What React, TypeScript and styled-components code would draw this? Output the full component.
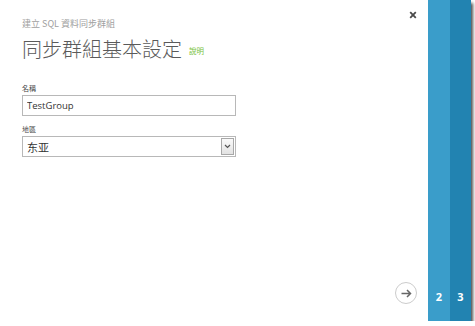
import { createGlobalStyle } from "styled-components";
import styled from "styled-components";

const GlobalStyle = createGlobalStyle`
  html, body {
    margin: 0;
    padding: 0;
    background: #ffffff;
    font-family: "Open Sans", "Noto Sans CJK TC", sans-serif;
  }
`;

const Panel = styled.div`
  display: flex;
  width: 471px;
  height: 321px;
  background: #ffffff;
  box-shadow: 2px 3px 3px rgba(0, 0, 0, 0.7);
`;

const Content = styled.div`
  flex: 1;
  display: flex;
  flex-direction: column;
  padding: 11px 11px 17px 22px;
`;

const Header = styled.div`
  display: flex;
  justify-content: space-between;
  align-items: flex-start;
`;

const Titles = styled.div`
  display: flex;
  flex-direction: column;
  padding-top: 7px;
`;

const Subtitle = styled.div`
  font-family: "Noto Sans CJK TC", sans-serif;
  font-size: 9px;
  line-height: 11px;
  color: #a0a0a0;
`;

const TitleRow = styled.div`
  display: flex;
  align-items: center;
  gap: 7px;
  margin-top: 8px;
`;

const Title = styled.h1`
  margin: 0;
  font-family: "Noto Sans CJK TC", sans-serif;
  font-weight: 300;
  font-size: 20px;
  line-height: 24px;
  color: #5a5a5a;
`;

const Help = styled.a`
  font-family: "Noto Sans CJK TC", sans-serif;
  font-size: 7.5px;
  line-height: 10px;
  color: #77c13a;
  margin-top: 3px;
`;

const CloseButton = styled.button`
  border: 0;
  padding: 0;
  background: none;
  width: 8px;
  height: 8px;
  display: flex;
`;

const Form = styled.div`
  display: flex;
  flex-direction: column;
  width: 214px;
  margin-top: 23px;
`;

const Label = styled.label<{ $first?: boolean }>`
  font-family: "Noto Sans CJK TC", sans-serif;
  font-size: 7px;
  line-height: 9px;
  color: #444444;
  margin-top: ${(p) => (p.$first ? "0" : "9px")};
  margin-bottom: 2px;
`;

const TextInput = styled.input`
  box-sizing: border-box;
  width: 214px;
  height: 21px;
  border: 1px solid #b8b8b8;
  padding: 0 4px;
  font-family: "Open Sans", sans-serif;
  font-size: 9.5px;
  color: #333333;
  outline: none;
`;

const SelectBox = styled.div`
  box-sizing: border-box;
  display: flex;
  align-items: center;
  justify-content: space-between;
  height: 21px;
  border: 1px solid #b8b8b8;
  padding: 0 1px 0 4px;
`;

const SelectValue = styled.span`
  font-family: "Noto Sans CJK SC", sans-serif;
  font-size: 11px;
  color: #333333;
`;

const DropButton = styled.span`
  box-sizing: border-box;
  display: flex;
  align-items: center;
  justify-content: center;
  width: 13px;
  height: 17px;
  border: 1px solid #a8a8a8;
  background: linear-gradient(#fafafa, #e2e2e2);
`;

const Footer = styled.div`
  margin-top: auto;
  display: flex;
  justify-content: flex-end;
`;

const NextButton = styled.button`
  box-sizing: border-box;
  width: 22px;
  height: 22px;
  padding: 0;
  border-radius: 50%;
  border: 1.5px solid #cccccc;
  background: #ffffff;
  display: flex;
  align-items: center;
  justify-content: center;
`;

const Step = styled.div<{ $bg: string; $w: number }>`
  width: ${(p) => p.$w}px;
  background: ${(p) => p.$bg};
  display: flex;
  align-items: flex-end;
  justify-content: center;
  padding-bottom: 18px;
  box-sizing: border-box;
  font-family: "Open Sans", sans-serif;
  font-weight: 700;
  font-size: 11px;
  line-height: 12px;
  color: #ffffff;
`;

export default function App() {
  return (
    <>
      <GlobalStyle />
      <Panel>
        <Content>
          <Header>
            <Titles>
              <Subtitle>建立 SQL 資料同步群組</Subtitle>
              <TitleRow>
                <Title>同步群組基本設定</Title>
                <Help>說明</Help>
              </TitleRow>
            </Titles>
            <CloseButton aria-label="close">
              <svg width="8" height="8" viewBox="0 0 8 8">
                <path d="M1.2 1.2L6.8 6.8M6.8 1.2L1.2 6.8" stroke="#4a4a4a" strokeWidth="1.8" />
              </svg>
            </CloseButton>
          </Header>

          <Form>
            <Label $first>名稱</Label>
            <TextInput defaultValue="TestGroup" />
            <Label>地區</Label>
            <SelectBox>
              <SelectValue>东亚</SelectValue>
              <DropButton>
                <svg width="7" height="5" viewBox="0 0 7 5">
                  <path d="M1 1L3.5 3.5L6 1" stroke="#555" strokeWidth="1.2" fill="none" />
                </svg>
              </DropButton>
            </SelectBox>
          </Form>

          <Footer>
            <NextButton aria-label="next">
              <svg width="11" height="9" viewBox="0 0 11 9">
                <path d="M0.5 4.5H9.5M6 1L9.5 4.5L6 8" stroke="#666" strokeWidth="1.5" fill="none" />
              </svg>
            </NextButton>
          </Footer>
        </Content>
        <Step $bg="#3a9dca" $w={22}>2</Step>
        <Step $bg="#2283b1" $w={21}>3</Step>
      </Panel>
    </>
  );
}
